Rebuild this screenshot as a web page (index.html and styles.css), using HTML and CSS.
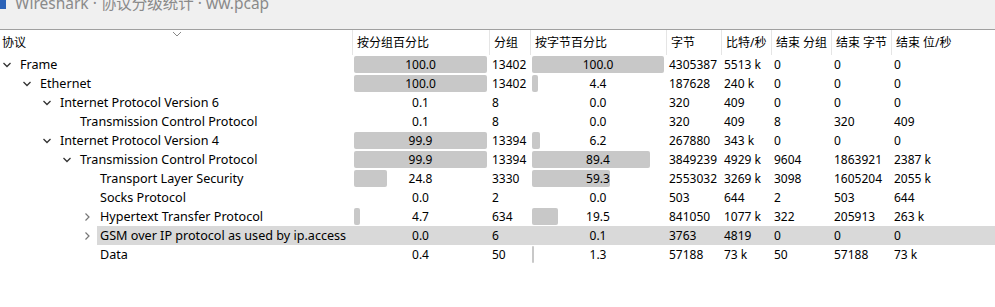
FILE: index.html
```html
<!DOCTYPE html>
<html lang="zh-CN">
<head>
    <meta charset="UTF-8">
    <title>Wireshark · 协议分级统计 · ww.pcap</title>
    <link rel="stylesheet" href="styles.css">
</head>
<body>
    <!-- window title -->
    <div class="titlebar">
        <span class="app-icon"></span>
        <span class="title-text">Wireshark · 协议分级统计 · ww.pcap</span>
    </div>

    <div class="tree">
        <div class="row header">
            <div class="cell name">协议<span class="sort-mark"><svg width="10" height="6" viewBox="0 0 10 6"><polyline points="1,1 5,5 9,1" fill="none" stroke="#888" stroke-width="1"/></svg></span></div>
            <div class="cell">按分组百分比</div>
            <div class="cell">分组</div>
            <div class="cell">按字节百分比</div>
            <div class="cell">字节</div>
            <div class="cell">比特/秒</div>
            <div class="cell">结束 分组</div>
            <div class="cell">结束 字节</div>
            <div class="cell">结束 位/秒</div>
        </div>
        <div id="rows"></div>
    </div>

    <script>
        // [level, open(1)/closed(0)/leaf(-1), name, pkt%, pkts, byte%, bytes, bps, endPkts, endBytes, endBps]
        var data = [
            [0, 1, "Frame", 100.0, 13402, 100.0, 4305387, "5513 k", 0, 0, 0],
            [1, 1, "Ethernet", 100.0, 13402, 4.4, 187628, "240 k", 0, 0, 0],
            [2, 1, "Internet Protocol Version 6", 0.1, 8, 0.0, 320, "409", 0, 0, 0],
            [3, -1, "Transmission Control Protocol", 0.1, 8, 0.0, 320, "409", 8, 320, 409],
            [2, 1, "Internet Protocol Version 4", 99.9, 13394, 6.2, 267880, "343 k", 0, 0, 0],
            [3, 1, "Transmission Control Protocol", 99.9, 13394, 89.4, 3849239, "4929 k", 9604, 1863921, "2387 k"],
            [4, -1, "Transport Layer Security", 24.8, 3330, 59.3, 2553032, "3269 k", 3098, 1605204, "2055 k"],
            [4, -1, "Socks Protocol", 0.0, 2, 0.0, 503, "644", 2, 503, 644],
            [4, 0, "Hypertext Transfer Protocol", 4.7, 634, 19.5, 841050, "1077 k", 322, 205913, "263 k"],
            [4, 0, "GSM over IP protocol as used by ip.access", 0.0, 6, 0.1, 3763, "4819", 0, 0, 0, true],
            [4, -1, "Data", 0.4, 50, 1.3, 57188, "73 k", 50, 57188, "73 k"]
        ];

        var openIcon = '<svg width="10" height="10" viewBox="0 0 10 10"><polyline points="1.5,3 5,6.5 8.5,3" fill="none" stroke="#333" stroke-width="1.3"/></svg>';
        var closedIcon = '<svg width="10" height="10" viewBox="0 0 10 10"><polyline points="3.5,1.5 7,5 3.5,8.5" fill="none" stroke="#777" stroke-width="1.2"/></svg>';

        function pctCell(value) {
            var bar = value >= 1 ? '<span class="bar" style="width: ' + value + '%"></span>' : '';
            return '<div class="cell pct"><div class="bar-track">' + bar + '<span class="pct-text">' + value.toFixed(1) + '</span></div></div>';
        }

        var html = "";
        for (var i = 0; i < data.length; i++) {
            var r = data[i];
            var icon = r[1] === 1 ? openIcon : (r[1] === 0 ? closedIcon : "");
            html += '<div class="row' + (r[11] ? ' selected' : '') + '">';
            html += '<div class="cell name" style="padding-left: ' + (r[0] * 20) + 'px"><span class="toggle">' + icon + '</span><span class="label">' + r[2] + '</span></div>';
            html += pctCell(r[3]);
            html += '<div class="cell">' + r[4] + '</div>';
            html += pctCell(r[5]);
            html += '<div class="cell">' + r[6] + '</div>';
            html += '<div class="cell">' + r[7] + '</div>';
            html += '<div class="cell">' + r[8] + '</div>';
            html += '<div class="cell">' + r[9] + '</div>';
            html += '<div class="cell">' + r[10] + '</div>';
            html += '</div>';
        }
        document.getElementById("rows").innerHTML = html;
    </script>
</body>
</html>
```

FILE: styles.css
```css
body {
    margin: 0;
    background: #fff;
    font-family: "Noto Sans", "Noto Sans CJK SC", sans-serif;
    font-size: 12px;
    color: #000;
    overflow: hidden;
}

.titlebar {
    height: 29px;
    background: #f0f0f0;
    border-bottom: 1px solid #a0a0a0;
    display: flex;
    align-items: flex-start;
    overflow: hidden;
}

.app-icon {
    width: 6px;
    height: 10px;
    background: #2c63b8;
    margin-top: -1px;
}

.title-text {
    margin-left: 9px;
    margin-top: -9px;
    font-size: 15.5px;
    color: #8a8a8a;
}

.row {
    display: grid;
    grid-template-columns: 352px 137px 41px 136px 55px 50px 60px 60px 1fr;
    height: 19px;
    line-height: 19px;
    white-space: nowrap;
}

.row.header {
    height: 25px;
    line-height: 26px;
}

.row.header .cell {
    border-left: 1px solid #e5e5e5;
    padding-left: 4px;
    position: relative;
}

.row.header .cell.name {
    border-left: none;
    padding-left: 2px;
}

.sort-mark {
    position: absolute;
    left: 172px;
    top: -10px;
}

.cell {
    padding-left: 3px;
    overflow: hidden;
}

.cell.name {
    display: flex;
    padding-left: 0;
}

.toggle {
    width: 20px;
    flex: none;
    display: flex;
    align-items: center;
    padding-left: 2px;
    box-sizing: border-box;
}

.label {
    flex: 1;
    font-size: 12.6px;
}

.row.selected .label {
    background: #d9d9d9;
    margin-left: -3px;
    padding-left: 3px;
}

.row.selected .cell:not(.name) {
    background: #d9d9d9;
}

.cell.pct {
    padding: 0 2px 0 2px;
}

.bar-track {
    position: relative;
    height: 19px;
}

.bar {
    position: absolute;
    left: 0;
    top: 1px;
    height: 17px;
    background: #c8c8c8;
    border-radius: 2px;
}

.pct-text {
    position: relative;
    display: block;
    text-align: center;
}
```
